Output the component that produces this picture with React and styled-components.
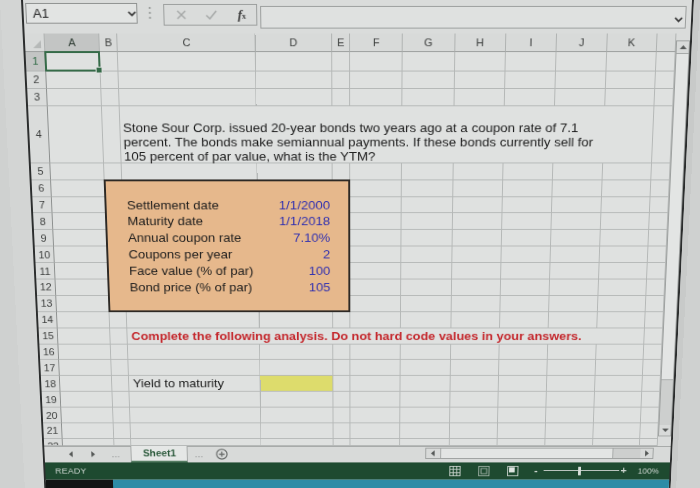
import React from 'react';
import styled, { createGlobalStyle } from 'styled-components';

const GRID_COLS =
  '20px 55.3px 18.2px 138.9px 76.4px 18.7px 52.8px 52.3px 51.4px 51.3px 50.3px 50.3px 19.1px';
const GRID_ROWS = '19.4px 20.1px 17.9px 17.9px 60px repeat(17, 17.9px) 7.9px';

const GlobalStyle = createGlobalStyle`
  html, body { margin: 0; padding: 0; }
  body {
    background: #cfd1d0;
    font-family: "Liberation Sans", Arial, sans-serif;
  }
`;

const Photo = styled.div`
  width: 700px;
  height: 488px;
  overflow: hidden;
  background: #cfd1d0;
`;

/* the screen is photographed at an angle: its lower edge lies farther away */
const Tilted = styled.div`
  width: 700px;
  height: 530px;
  display: flex;
  transform-origin: 357px 0;
  transform: perspective(1000px) rotateX(-8.1deg);
`;

const LeftBezel = styled.div`
  flex: 0 0 21px;
  background: #d3d5d4;
`;

const RightBezel = styled.div`
  flex: 1 1 auto;
  background: #c8cac9;
`;

const Monitor = styled.div`
  flex: 0 0 673px;
  box-sizing: border-box;
  height: 530px;
  border-left: 2px solid #2b2d2d;
  border-right: 2px solid #2b2d2d;
  background: #dadcdb;
  display: flex;
  flex-direction: column;
`;

/* ---------- formula bar ---------- */
const FormulaBar = styled.div`
  flex: 0 0 33.5px;
  display: flex;
  align-items: flex-start;
`;

const NameBox = styled.div`
  margin: 3px 0 0 2.3px;
  width: 112px;
  height: 21.3px;
  box-sizing: border-box;
  border: 1px solid #8f9291;
  background: #e2e4e3;
  display: flex;
  align-items: center;
  justify-content: space-between;
  padding: 0 0.5px 0 6px;
  font-size: 13px;
  color: #222;
`;

const Grip = styled.div`
  margin: 6px 0 0 9.7px;
  width: 6px;
  display: flex;
  justify-content: center;
`;

const FuncBox = styled.div`
  margin: 4px 0 0 9.6px;
  width: 94.2px;
  height: 22.4px;
  box-sizing: border-box;
  border: 1px solid #9c9f9e;
  display: grid;
  grid-template-columns: 34px 26px 1fr;
  align-items: center;
  justify-items: center;
`;

const Fx = styled.span`
  padding-left: 4px;
  font-family: "Liberation Serif", "Times New Roman", serif;
  font-style: italic;
  font-weight: bold;
  font-size: 13px;
  color: #3a3a3a;
  & small {
    font-size: 8px;
    font-style: normal;
  }
`;

const FormulaInput = styled.div`
  margin: 6px 0 0 3px;
  width: 427px;
  height: 22.5px;
  box-sizing: border-box;
  border: 1px solid #9c9f9e;
  background: #dfe1e0;
  display: flex;
  align-items: flex-end;
  justify-content: flex-end;
  padding: 0 2px 5px 0;
`;

/* ---------- sheet ---------- */
const SheetArea = styled.div`
  flex: 0 0 447.5px;
  display: flex;
`;

const GridStack = styled.div`
  flex: 0 0 655px;
  display: grid;
  & > * {
    grid-area: 1 / 1;
  }
`;

const Layer = styled.div`
  display: grid;
  grid-template-columns: ${GRID_COLS};
  grid-template-rows: ${GRID_ROWS};
  min-height: 0;
`;

const BaseLayer = styled(Layer)`
  background: #dfe1e0;
`;

const OverlayLayer = styled(Layer)`
  pointer-events: none;
`;

const Corner = styled.div`
  box-sizing: border-box;
  border-right: 1px solid #b0b3b2;
  border-bottom: 1px solid #9b9e9d;
  background: #d8dad9;
  display: flex;
  align-items: flex-end;
  justify-content: flex-end;
  padding: 0 3px 3px 0;
`;

const ColHeader = styled.div`
  box-sizing: border-box;
  border-right: 1px solid #b0b3b2;
  border-bottom: 1px solid #9b9e9d;
  background: ${(p) => (p.$active ? '#c3c5c4' : '#d8dad9')};
  color: ${(p) => (p.$active ? '#2c3a31' : '#3b3d3c')};
  font-size: 11px;
  display: flex;
  align-items: center;
  justify-content: center;
  overflow: hidden;
`;

const RowHeader = styled.div`
  box-sizing: border-box;
  border-right: 1px solid #8d908f;
  border-bottom: 1px solid #b5b8b7;
  background: ${(p) => (p.$active ? '#c3c5c4' : '#dadcdb')};
  color: ${(p) => (p.$active ? '#2f6a45' : '#3b3d3c')};
  font-size: 11px;
  display: flex;
  align-items: ${(p) => (p.$partial ? 'flex-start' : 'center')};
  line-height: ${(p) => (p.$partial ? '17.9px' : 'normal')};
  justify-content: center;
  overflow: hidden;
`;

const Cell = styled.div`
  box-sizing: border-box;
  min-width: 0;
  border-right: 1px solid #b5b8b7;
  border-bottom: 1px solid #b5b8b7;
  background: ${(p) => p.$fill || 'transparent'};
  font-size: 13.5px;
  color: #1b1b1b;
  white-space: nowrap;
  display: flex;
  align-items: center;
  padding-left: 3.6px;
`;

const MergedCell = styled(Cell)`
  grid-column: span 9;
`;

const Paragraph = styled(MergedCell)`
  align-items: flex-end;
  white-space: normal;
  line-height: 15.3px;
  padding-left: 2.2px;
`;

const ParagraphText = styled.div`
  margin-bottom: -2px;
`;

const Alert = styled(MergedCell)`
  color: #c4282d;
  font-weight: bold;
  font-size: 13.3px;
`;

const DataBox = styled.div`
  grid-column: 3 / 7;
  grid-row: 7 / 15;
  margin: -1px 0 0 -1px;
  border: 2px solid #2d2925;
  background: #e6b88c;
  display: grid;
  grid-template-columns: 138.9px 76.4px;
  grid-auto-rows: 17.9px;
  align-content: start;
  padding: 16.9px 0 0 17.2px;
`;

const BoxLabel = styled.span`
  font-size: 13.5px;
  line-height: 17.9px;
  color: #1b1b1b;
  padding-left: 3.6px;
  white-space: nowrap;
`;

const BoxValue = styled.span`
  font-size: 13.5px;
  line-height: 17.9px;
  color: #2f2fb0;
  text-align: right;
  padding-right: 2.6px;
`;

const Selection = styled.div`
  grid-column: 2 / 3;
  grid-row: 2 / 3;
  margin: -1px 0 0 -1px;
  border: 2px solid #356b48;
  position: relative;
`;

const FillHandle = styled.span`
  position: absolute;
  right: -4px;
  bottom: -4px;
  width: 5px;
  height: 5px;
  background: #356b48;
  border: 1px solid #dfe1e0;
`;

/* ---------- vertical scroll bar ---------- */
const VScroll = styled.div`
  flex: 0 0 14px;
  box-sizing: border-box;
  margin: 7px 0 11px;
  border: 1px solid #9ea1a0;
  background: #cdcfce;
  display: flex;
  flex-direction: column;
`;

const ScrollBtn = styled.div`
  flex: 0 0 ${(p) => p.$size}px;
  display: flex;
  align-items: center;
  justify-content: center;
  background: #d8dad9;
`;

const VThumb = styled.div`
  flex: 0 0 350px;
  background: #e3e5e4;
  border-top: 1px solid #a5a8a7;
  border-bottom: 1px solid #a5a8a7;
`;

const Track = styled.div`
  flex: 1 1 auto;
`;

/* ---------- sheet tabs ---------- */
const TabBar = styled.div`
  flex: 0 0 18.5px;
  box-sizing: border-box;
  display: flex;
  align-items: stretch;
  border-top: 1px solid #a3a6a5;
  background: #d8dad9;
  padding-left: 16.2px;
`;

const NavBtn = styled.div`
  flex: 0 0 24px;
  display: flex;
  align-items: center;
  justify-content: center;
  color: #6a6d6c;
  font-size: 9px;
  letter-spacing: 0.5px;
`;

const SheetTab = styled.div`
  flex: 0 0 61px;
  margin: -1px 0 0 4.2px;
  box-sizing: border-box;
  background: #e5e7e6;
  border-left: 1px solid #a3a6a5;
  border-right: 1px solid #a3a6a5;
  border-bottom: 2px solid #557c62;
  display: flex;
  align-items: center;
  justify-content: center;
  font-weight: bold;
  font-size: 10.8px;
  color: #2c5a3c;
`;

const HScroll = styled.div`
  flex: 0 0 244.3px;
  margin: 1px 18px 0 auto;
  height: 13px;
  box-sizing: border-box;
  border: 1px solid #9ea1a0;
  background: #cdcfce;
  display: flex;
`;

const HThumb = styled.div`
  flex: 0 0 182.8px;
  background: #e3e5e4;
  border-left: 1px solid #a5a8a7;
  border-right: 1px solid #a5a8a7;
`;

/* ---------- status bar ---------- */
const StatusBar = styled.div`
  flex: 0 0 20.5px;
  background: #1e4a30;
  display: flex;
  align-items: center;
  padding: 0 11.4px 0 10.4px;
  color: #cdd6d0;
`;

const Ready = styled.span`
  font-size: 9.5px;
  letter-spacing: 0.2px;
`;

const ViewBtn = styled.div`
  flex: 0 0 31px;
  display: flex;
  align-items: center;
  justify-content: center;
  &:first-of-type {
    margin-left: auto;
  }
`;

const ZoomSign = styled.span`
  flex: 0 0 10px;
  margin-left: ${(p) => p.$gap}px;
  text-align: center;
  font-size: 11px;
  font-weight: bold;
  line-height: 1;
`;

const Slider = styled.div`
  flex: 0 0 80.4px;
  margin-left: 3.6px;
  height: 10px;
  display: flex;
  align-items: center;
  justify-content: center;
  position: relative;
  &::before {
    content: '';
    position: absolute;
    left: 0;
    right: 0;
    top: 4.5px;
    height: 1px;
    background: #b9c3bd;
  }
`;

const SliderThumb = styled.span`
  width: 3px;
  height: 10px;
  background: #d7ded9;
  position: relative;
  margin-left: -5px;
`;

const ZoomText = styled.span`
  margin-left: 10.3px;
  font-size: 8.8px;
`;

const TaskStrip = styled.div`
  flex: 1 1 auto;
  display: flex;
`;

const StripDark = styled.div`
  flex: 0 0 72px;
  background: #121414;
`;

const StripTeal = styled.div`
  flex: 1 1 auto;
  background: #2d8ca6;
`;

/* ---------- drawings ---------- */
const Chevron = () => (
  <svg width="9" height="6" viewBox="0 0 9 6">
    <path d="M1 1 L4.5 4.6 L8 1" stroke="#333" strokeWidth="1.7" fill="none" />
  </svg>
);

const VDots = () => (
  <svg width="3" height="14" viewBox="0 0 3 14">
    <circle cx="1.5" cy="2" r="1" fill="#8c8f8e" />
    <circle cx="1.5" cy="7" r="1" fill="#8c8f8e" />
    <circle cx="1.5" cy="12" r="1" fill="#8c8f8e" />
  </svg>
);

const Cross = () => (
  <svg width="10" height="10" viewBox="0 0 10 10">
    <path d="M1 1L9 9M9 1L1 9" stroke="#a4a7a6" strokeWidth="1.4" />
  </svg>
);

const Tick = () => (
  <svg width="12" height="10" viewBox="0 0 12 10">
    <path d="M1 5.5L4.5 9L11 1" stroke="#a4a7a6" strokeWidth="1.4" fill="none" />
  </svg>
);

const CornerMark = () => (
  <svg width="8" height="8" viewBox="0 0 8 8">
    <polygon points="8,0 8,8 0,8" fill="#b6b9b8" />
  </svg>
);

const Arrow = ({ dir }) => {
  const d = {
    up: 'M0 4 L3.5 0 L7 4Z',
    down: 'M0 0 L3.5 4 L7 0Z',
    left: 'M4 0 L0 3.5 L4 7Z',
    right: 'M0 0 L4 3.5 L0 7Z',
  }[dir];
  const vertical = dir === 'up' || dir === 'down';
  return (
    <svg width={vertical ? 7 : 4} height={vertical ? 4 : 7} viewBox={vertical ? '0 0 7 4' : '0 0 4 7'}>
      <path d={d} fill="#555857" />
    </svg>
  );
};

const AddSheet = () => (
  <svg width="13" height="13" viewBox="0 0 13 13">
    <circle cx="6.5" cy="6.5" r="5.6" stroke="#666968" strokeWidth="1.2" fill="none" />
    <path d="M6.5 3.5V9.5M3.5 6.5H9.5" stroke="#666968" strokeWidth="1.3" />
  </svg>
);

const NormalView = () => (
  <svg width="12" height="12" viewBox="0 0 12 12">
    <rect x="0.5" y="0.5" width="11" height="11" fill="none" stroke="#c9d2cc" />
    <path d="M4.2 0.5V11.5M7.8 0.5V11.5M0.5 4.2H11.5M0.5 7.8H11.5" stroke="#c9d2cc" />
  </svg>
);

const LayoutView = () => (
  <svg width="12" height="12" viewBox="0 0 12 12">
    <rect x="0.5" y="0.5" width="11" height="11" fill="none" stroke="#9fb0a5" />
    <rect x="3" y="3" width="6" height="6" fill="none" stroke="#9fb0a5" />
  </svg>
);

const BreakView = () => (
  <svg width="12" height="12" viewBox="0 0 12 12">
    <rect x="0.5" y="0.5" width="11" height="11" fill="none" stroke="#c9d2cc" />
    <rect x="2" y="1.5" width="6" height="6" fill="#dfe5e1" />
  </svg>
);

/* ---------- data ---------- */
const LETTERS = ['A', 'B', 'C', 'D', 'E', 'F', 'G', 'H', 'I', 'J', 'K', ''];

const BOND = [
  ['Settlement date', '1/1/2000'],
  ['Maturity date', '1/1/2018'],
  ['Annual coupon rate', '7.10%'],
  ['Coupons per year', '2'],
  ['Face value (% of par)', '100'],
  ['Bond price (% of par)', '105'],
];

function buildRows() {
  const rows = [];
  for (let r = 1; r <= 22; r++) {
    const cells = [
      <RowHeader key={`h${r}`} $active={r === 1} $partial={r === 22}>
        {r}
      </RowHeader>,
    ];
    if (r === 4) {
      cells.push(
        <Cell key="a" />,
        <Cell key="b" />,
        <Paragraph key="p">
          <ParagraphText>
            Stone Sour Corp. issued 20-year bonds two years ago at a coupon rate of 7.1
            <br />
            percent. The bonds make semiannual payments. If these bonds currently sell for
            <br />
            105 percent of par value, what is the YTM?
          </ParagraphText>
        </Paragraph>,
        <Cell key="l" />
      );
    } else if (r === 15) {
      cells.push(
        <Cell key="a" />,
        <Cell key="b" />,
        <Alert key="m">
          Complete the following analysis. Do not hard code values in your answers.
        </Alert>,
        <Cell key="l" />
      );
    } else {
      LETTERS.forEach((c, i) => {
        let content = null;
        let fill;
        if (r === 18 && c === 'C') content = 'Yield to maturity';
        if (r === 18 && c === 'D') fill = '#dddc6c';
        cells.push(
          <Cell key={`c${i}`} $fill={fill}>
            {content}
          </Cell>
        );
      });
    }
    rows.push(<React.Fragment key={r}>{cells}</React.Fragment>);
  }
  return rows;
}

export default function App() {
  return (
    <>
      <GlobalStyle />
      <Photo>
        <Tilted>
          <LeftBezel />
          <Monitor>
            <FormulaBar>
              <NameBox>
                <span>A1</span>
                <Chevron />
              </NameBox>
              <Grip>
                <VDots />
              </Grip>
              <FuncBox>
                <Cross />
                <Tick />
                <Fx>
                  f<small>x</small>
                </Fx>
              </FuncBox>
              <FormulaInput>
                <Chevron />
              </FormulaInput>
            </FormulaBar>

            <SheetArea>
              <GridStack>
                <BaseLayer>
                  <Corner>
                    <CornerMark />
                  </Corner>
                  {LETTERS.map((c, i) => (
                    <ColHeader key={`ch${i}`} $active={c === 'A'}>
                      {c}
                    </ColHeader>
                  ))}
                  {buildRows()}
                </BaseLayer>
                <OverlayLayer>
                  <Selection>
                    <FillHandle />
                  </Selection>
                  <DataBox>
                    {BOND.map(([label, value]) => (
                      <React.Fragment key={label}>
                        <BoxLabel>{label}</BoxLabel>
                        <BoxValue>{value}</BoxValue>
                      </React.Fragment>
                    ))}
                  </DataBox>
                </OverlayLayer>
              </GridStack>
              <VScroll>
                <ScrollBtn $size={12}>
                  <Arrow dir="up" />
                </ScrollBtn>
                <VThumb />
                <Track />
                <ScrollBtn $size={12}>
                  <Arrow dir="down" />
                </ScrollBtn>
              </VScroll>
            </SheetArea>

            <TabBar>
              <NavBtn>
                <Arrow dir="left" />
              </NavBtn>
              <NavBtn>
                <Arrow dir="right" />
              </NavBtn>
              <NavBtn>...</NavBtn>
              <SheetTab>Sheet1</SheetTab>
              <NavBtn>...</NavBtn>
              <NavBtn>
                <AddSheet />
              </NavBtn>
              <HScroll>
                <ScrollBtn $size={15}>
                  <Arrow dir="left" />
                </ScrollBtn>
                <HThumb />
                <Track />
                <ScrollBtn $size={13}>
                  <Arrow dir="right" />
                </ScrollBtn>
              </HScroll>
            </TabBar>

            <StatusBar>
              <Ready>READY</Ready>
              <ViewBtn>
                <NormalView />
              </ViewBtn>
              <ViewBtn>
                <LayoutView />
              </ViewBtn>
              <ViewBtn>
                <BreakView />
              </ViewBtn>
              <ZoomSign $gap={4.3}>-</ZoomSign>
              <Slider>
                <SliderThumb />
              </Slider>
              <ZoomSign $gap={0}>+</ZoomSign>
              <ZoomText>100%</ZoomText>
            </StatusBar>

            <TaskStrip>
              <StripDark />
              <StripTeal />
            </TaskStrip>
          </Monitor>
          <RightBezel />
        </Tilted>
      </Photo>
    </>
  );
}
